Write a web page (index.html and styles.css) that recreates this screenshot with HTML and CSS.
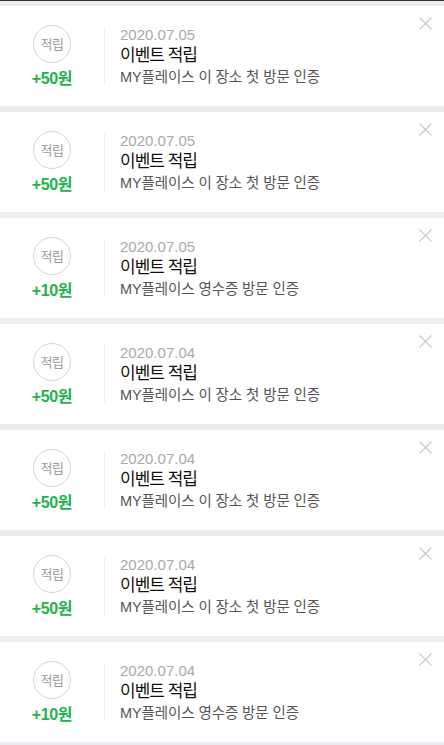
FILE: index.html
```html
<html>
<head>
<title>적립 내역</title>
<link rel="stylesheet" href="styles.css">
</head>
<body>

<div class="list">

  <div class="item">
    <div class="badge">
      <span class="circle">적립</span>
      <span class="amount">+50원</span>
    </div>
    <div class="info">
      <p class="date">2020.07.05</p>
      <p class="title">이벤트 적립</p>
      <p class="desc">MY플레이스 이 장소 첫 방문 인증</p>
    </div>
    <button class="close"><svg width="13" height="13" viewBox="0 0 13 13"><path d="M0.5 0.5L12.5 12.5M12.5 0.5L0.5 12.5" stroke="#c8c8c8" stroke-width="1.1" fill="none"/></svg></button>
  </div>

  <div class="item">
    <div class="badge">
      <span class="circle">적립</span>
      <span class="amount">+50원</span>
    </div>
    <div class="info">
      <p class="date">2020.07.05</p>
      <p class="title">이벤트 적립</p>
      <p class="desc">MY플레이스 이 장소 첫 방문 인증</p>
    </div>
    <button class="close"><svg width="13" height="13" viewBox="0 0 13 13"><path d="M0.5 0.5L12.5 12.5M12.5 0.5L0.5 12.5" stroke="#c8c8c8" stroke-width="1.1" fill="none"/></svg></button>
  </div>

  <div class="item">
    <div class="badge">
      <span class="circle">적립</span>
      <span class="amount">+10원</span>
    </div>
    <div class="info">
      <p class="date">2020.07.05</p>
      <p class="title">이벤트 적립</p>
      <p class="desc">MY플레이스 영수증 방문 인증</p>
    </div>
    <button class="close"><svg width="13" height="13" viewBox="0 0 13 13"><path d="M0.5 0.5L12.5 12.5M12.5 0.5L0.5 12.5" stroke="#c8c8c8" stroke-width="1.1" fill="none"/></svg></button>
  </div>

  <div class="item">
    <div class="badge">
      <span class="circle">적립</span>
      <span class="amount">+50원</span>
    </div>
    <div class="info">
      <p class="date">2020.07.04</p>
      <p class="title">이벤트 적립</p>
      <p class="desc">MY플레이스 이 장소 첫 방문 인증</p>
    </div>
    <button class="close"><svg width="13" height="13" viewBox="0 0 13 13"><path d="M0.5 0.5L12.5 12.5M12.5 0.5L0.5 12.5" stroke="#c8c8c8" stroke-width="1.1" fill="none"/></svg></button>
  </div>

  <div class="item">
    <div class="badge">
      <span class="circle">적립</span>
      <span class="amount">+50원</span>
    </div>
    <div class="info">
      <p class="date">2020.07.04</p>
      <p class="title">이벤트 적립</p>
      <p class="desc">MY플레이스 이 장소 첫 방문 인증</p>
    </div>
    <button class="close"><svg width="13" height="13" viewBox="0 0 13 13"><path d="M0.5 0.5L12.5 12.5M12.5 0.5L0.5 12.5" stroke="#c8c8c8" stroke-width="1.1" fill="none"/></svg></button>
  </div>

  <div class="item">
    <div class="badge">
      <span class="circle">적립</span>
      <span class="amount">+50원</span>
    </div>
    <div class="info">
      <p class="date">2020.07.04</p>
      <p class="title">이벤트 적립</p>
      <p class="desc">MY플레이스 이 장소 첫 방문 인증</p>
    </div>
    <button class="close"><svg width="13" height="13" viewBox="0 0 13 13"><path d="M0.5 0.5L12.5 12.5M12.5 0.5L0.5 12.5" stroke="#c8c8c8" stroke-width="1.1" fill="none"/></svg></button>
  </div>

  <div class="item">
    <div class="badge">
      <span class="circle">적립</span>
      <span class="amount">+10원</span>
    </div>
    <div class="info">
      <p class="date">2020.07.04</p>
      <p class="title">이벤트 적립</p>
      <p class="desc">MY플레이스 영수증 방문 인증</p>
    </div>
    <button class="close"><svg width="13" height="13" viewBox="0 0 13 13"><path d="M0.5 0.5L12.5 12.5M12.5 0.5L0.5 12.5" stroke="#c8c8c8" stroke-width="1.1" fill="none"/></svg></button>
  </div>

</div>

</body>
</html>
```

FILE: styles.css
```css
body {
  margin: 0;
  background: #ebedf0;
  font-family: "Liberation Sans", "Noto Sans CJK KR", sans-serif;
  border-top: 1px solid #333;
}

.list {
  display: flex;
  flex-direction: column;
  gap: 6px;
  padding: 5px 0 6px;
}

.item {
  position: relative;
  display: flex;
  align-items: center;
  height: 100px;
  background: #fff;
}

.badge {
  width: 104px;
  display: flex;
  flex-direction: column;
  align-items: center;
  gap: 7px;
}

.circle {
  width: 36px;
  height: 36px;
  border: 1px solid #d6d6d6;
  border-radius: 50%;
  display: flex;
  align-items: center;
  justify-content: center;
  font-size: 13px;
  color: #9a9a9a;
  letter-spacing: -0.5px;
}

.amount {
  font-size: 16px;
  font-weight: bold;
  color: #22b24c;
  letter-spacing: -0.4px;
  line-height: 18px;
}

.info {
  border-left: 1px solid #eee;
  padding: 0 0 0 15px;
  height: 58px;
  display: flex;
  flex-direction: column;
  justify-content: center;
}

.info p {
  margin: 0;
}

.date {
  font-size: 15px;
  color: #aaa;
  line-height: 20px;
}

.title {
  font-size: 17px;
  color: #111;
  line-height: 22px;
  letter-spacing: -1px;
}

.desc {
  font-size: 14.5px;
  color: #555;
  line-height: 20px;
  letter-spacing: -0.1px;
}

.close {
  position: absolute;
  top: 11px;
  right: 12px;
  border: none;
  background: none;
  padding: 0;
  width: 13px;
  height: 13px;
  line-height: 0;
}
```
